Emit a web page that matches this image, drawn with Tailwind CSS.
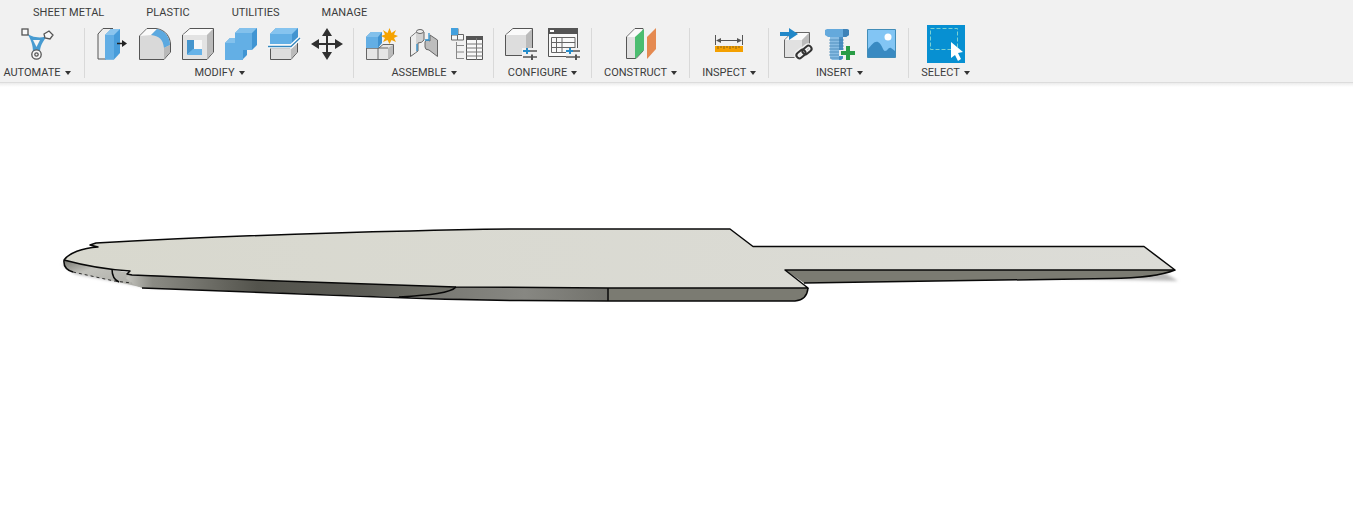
<!DOCTYPE html>
<html lang="en">
<head>
<meta charset="utf-8">
<meta name="viewport" content="width=device-width, initial-scale=1">
<title>Solid modeling workspace</title>
<script src="https://cdn.jsdelivr.net/npm/@tailwindcss/browser@4"></script>
</head>
<body class="min-h-screen bg-white font-['Roboto','Liberation_Sans',sans-serif] text-[11px] leading-4 text-[#3c3c3c]">
<header class="overflow-hidden border-b border-[#dcdcdc] bg-[#f1f1f1]">
  <nav aria-label="Workspace tabs" class="flex gap-[42px] pt-[5px] pl-[33px] whitespace-nowrap">
    <a href="#sheet-metal">SHEET METAL</a>
    <a href="#plastic">PLASTIC</a>
    <a href="#utilities">UTILITIES</a>
    <a href="#manage">MANAGE</a>
  </nav>
  <div role="toolbar" aria-label="Modeling tools" class="flex pt-[7px] pb-1">
    <section class="flex w-[85px] shrink-0 flex-col items-center border-r border-[#d9d9d9] pr-[10px]">
      <div class="flex h-8"><button type="button" aria-label="Automated modeling" class="size-8">
        <svg viewBox="0 0 32 32" class="size-8 overflow-visible"><path d="M5 4C9 10 23 11 27 7C21 14 19 19 19 24H12C12 17 10 11 5 4Z" fill="#479bd1"/><path d="M12 12H19L15.500 19Z" fill="#f5f5f5"/><g fill="#f8f8f8" stroke="#555" stroke-width="1.300"><rect x="1" y="1" width="6" height="6"/><path d="M23 6L28 3L32 7L29 11L24 10Z"/><circle cx="15.500" cy="26.500" r="4.700"/><circle cx="15.500" cy="26.500" r="1.700"/></g></svg></button></div>
      <button type="button" class="flex h-[18px] items-center gap-1 pt-2 leading-[10px]">AUTOMATE<svg viewBox="0 0 6 4" class="h-1 w-[6px]"><path d="M0 0H6L3 4Z" fill="#333"/></svg></button>
    </section>
    <section class="flex shrink-0 flex-col items-center border-r border-[#d9d9d9] pr-[10px] pl-[11px]">
      <div class="flex gap-[11px]">
        <button type="button" aria-label="Press pull" class="size-8"><svg viewBox="0 0 32 32" class="size-8 overflow-visible"><path d="M2 31V6L7 .5H17L10 7V31Z" fill="#eee" stroke="#555"/><path d="M9 7L15 1H24V25L18 31.500H9Z" fill="#479cda"/><path d="M9 7L15 1H24L18 7Z" fill="#8bc5ee"/><path d="M9 7H18V31.500H9Z" fill="#62aee5"/><path d="M21 15.500H27" stroke="#222" stroke-width="1.500"/><path d="M26 12L31 15.500L26 19Z" fill="#222"/></svg></button>
        <button type="button" aria-label="Fillet" class="size-8"><svg viewBox="0 0 32 32" class="size-8 overflow-visible"><path d="M.5 31.500V8L8 .5H17C27 2 31 9 31.500 16V24L25 31.500Z" fill="#d9d9d9" stroke="#555"/><path d="M1 8L8 1H18L12 7Z" fill="#fafafa"/><path d="M12 7L18 1C27 3 31 10 31 17L25 20C24 11 20 8 12 7Z" fill="#5ca9e0"/><path d="M25 20L31 17V24L25 31Z" fill="#b9b9b9"/></svg></button>
        <button type="button" aria-label="Shell" class="size-8"><svg viewBox="0 0 32 32" class="size-8 overflow-visible"><path d="M.5 7L8 .5H31.500V24L25 31.500H.5Z" fill="#e3e3e3" stroke="#555"/><path d="M1 7L8 1H31L25 7Z" fill="#fafafa"/><path d="M25 7L31 1V24L25 31Z" fill="#bbb"/><path d="M5 12H20V27H5Z" fill="#f7f7f7"/><path d="M5 12H12V21L5 27Z" fill="#4595cd"/><path d="M5 27L11 21H20V27Z" fill="#67b3e8"/></svg></button>
        <button type="button" aria-label="Combine" class="size-8"><svg viewBox="0 0 32 32" class="size-8 overflow-visible"><path d="M0 15L5 10H10V5L15 0H32V17L27 22H22V27L17 32H0Z" fill="#4095d3"/><path d="M0 15H10V5H27V22H18V32H0Z" fill="#63afe5"/><path d="M10 5L15 0H32L27 5Z" fill="#83c1ec"/><path d="M0 15L5 10H10V15Z" fill="#83c1ec"/></svg></button>
        <button type="button" aria-label="Split body" class="size-8"><svg viewBox="0 0 32 32" class="size-8 overflow-visible"><path d="M2.500 20H22L29.500 13V24L23 31.500H2.500Z" fill="#ddd" stroke="#555"/><path d="M23 21L29 15V24L23 31Z" fill="#bbb"/><path d="M2 6L8 0H30V10L24 16H2Z" fill="#4294d0"/><path d="M2 6H24V16H2Z" fill="#62afe5"/><path d="M2 6L8 0H30L24 6Z" fill="#86c4ef"/><path d="M0 18.500H23L32 10" fill="none" stroke="#fff" stroke-width="4"/><path d="M0 18.500H23L32 10" fill="none" stroke="#3486bd" stroke-width="1.300"/></svg></button>
        <button type="button" aria-label="Move" class="size-8"><svg viewBox="0 0 32 32" class="size-8 overflow-visible"><path d="M16 3V29M3 16H29" stroke="#303030" stroke-width="2"/><path d="M16 0L21 8H11ZM16 32L11 24H21ZM0 16L8 11V21ZM32 16L24 21V11Z" fill="#303030"/></svg></button>
      </div>
      <button type="button" class="flex h-[18px] items-center gap-1 pt-2 leading-[10px]">MODIFY<svg viewBox="0 0 6 4" class="h-1 w-[6px]"><path d="M0 0H6L3 4Z" fill="#333"/></svg></button>
    </section>
    <section class="flex shrink-0 flex-col items-center border-r border-[#d9d9d9] pr-[10px] pl-[11px]">
      <div class="flex gap-[11px]">
        <button type="button" aria-label="New component" class="size-8"><svg viewBox="0 0 32 32" class="size-8 overflow-visible"><path d="M1.500 20H14L18 16.500H28.500V26L23 31.500H1.500Z" fill="#e5e5e5" stroke="#666"/><path d="M13 20V31M1 20H23" stroke="#666"/><path d="M23 20L28 17V26L23 31Z" fill="#bbb"/><path d="M1 9L6 4H17V15L13 20H1Z" fill="#3f91cf"/><path d="M1 9H13V20H1Z" fill="#63aee4"/><path d="M1 9L6 4H17L13 9Z" fill="#82c0eb"/><path d="M24.500 0L26.500 5L31 2L29 6.500L33 8L29 10L31 14L26.500 12L24.500 16L22.500 12L18 14L20 10L16 8L20 6.500L18 2L22.500 5Z" fill="#f5a300"/></svg></button>
        <button type="button" aria-label="Joint" class="size-8"><svg viewBox="0 0 32 32" class="size-8 overflow-visible"><path d="M2.500 9L10 3Q14 1 16 4V12Q14 15 10 15V23L2.500 28.500Z" fill="#d2d2d2" stroke="#666"/><path d="M3 9L8 5V24L3 27Z" fill="#eee"/><path d="M22 13V7L29.500 12V28.500L21 22Q17 22 17 19V14Q18 11 22 13Z" fill="#bdbdbd" stroke="#666"/><ellipse cx="12" cy="3.500" rx="3.500" ry="2" fill="#eee" stroke="#666"/><path d="M9 16V23M21 5V12H17" fill="none" stroke="#3192cf" stroke-width="1.300"/></svg></button>
        <button type="button" aria-label="Table of components" class="size-8"><svg viewBox="0 0 32 32" class="size-8 overflow-visible"><path d="M5.500 14V31M5.500 17.500H13M5.500 24H13M5.500 30.500H13" fill="none" stroke="#888"/><path d="M.500 .5H7V7H.5ZM.5 6.500H6.500V12H.5ZM6.500 6.500H12.500V12H6.500Z" fill="#f7f7f7" stroke="#666"/><path d="M0 0H7V7H0Z" fill="#43a0dd"/><path d="M15.500 8.500H31.500V31.500H15.500Z" fill="#f9f9f9" stroke="#555"/><path d="M15 8H32V12H15Z" fill="#555"/><path d="M15 16H32M15 20H32M15 24H32M15 28H32M25.500 10V32" stroke="#777"/></svg></button>
      </div>
      <button type="button" class="flex h-[18px] items-center gap-1 pt-2 leading-[10px]">ASSEMBLE<svg viewBox="0 0 6 4" class="h-1 w-[6px]"><path d="M0 0H6L3 4Z" fill="#333"/></svg></button>
    </section>
    <section class="flex shrink-0 flex-col items-center border-r border-[#d9d9d9] px-[11px]">
      <div class="flex gap-[11px]">
        <button type="button" aria-label="Configure model" class="size-8"><svg viewBox="0 0 32 32" class="size-8 overflow-visible"><path d="M.5 7L8 .5H27.500V20L20 27.500H.5Z" fill="#ddd" stroke="#555"/><path d="M1 7L8 1H27L21 7Z" fill="#fafafa"/><path d="M21 7L27 1V20L21 27Z" fill="#bbb"/><path d="M17 20H33V33H17Z" fill="#f1f1f1"/><path d="M18 23H32M18 29H32" stroke="#555" stroke-width="1.600"/><path d="M18 23H25M22 20V26" stroke="#258bc9" stroke-width="2"/><path d="M27 26.500V32" stroke="#555" stroke-width="2"/></svg></button>
        <button type="button" aria-label="Configuration table" class="size-8"><svg viewBox="0 0 32 32" class="size-8 overflow-visible"><path d="M.5 .5H29.500V28.500H.5Z" fill="#f9f9f9" stroke="#555"/><path d="M0 0H30V6H0Z" fill="#555"/><path d="M2 2H6V4H2Z" fill="#fff"/><path d="M3.500 9.500H27V24.500H3.500ZM3.500 14.500H27M3.500 19.500H27M8.500 9.500V24.500M14 9.500V24.500" fill="none" stroke="#666"/><path d="M18 20H33V33H18Z" fill="#f1f1f1"/><path d="M18 23H32M18 29H32" stroke="#555" stroke-width="1.600"/><path d="M18 23H25M22 20V26" stroke="#258bc9" stroke-width="2"/><path d="M28 26.500V32" stroke="#555" stroke-width="2"/></svg></button>
      </div>
      <button type="button" class="flex h-[18px] items-center gap-1 pt-2 leading-[10px]">CONFIGURE<svg viewBox="0 0 6 4" class="h-1 w-[6px]"><path d="M0 0H6L3 4Z" fill="#333"/></svg></button>
    </section>
    <section class="flex shrink-0 flex-col items-center border-r border-[#d9d9d9] px-3">
      <button type="button" aria-label="Offset plane" class="size-8"><svg viewBox="0 0 32 32" class="size-8 overflow-visible"><path d="M1.500 30.500V9L10 .5H18V23L11 30.500Z" fill="#e1e1e1" stroke="#555"/><path d="M2 9L10 1H18L11 9Z" fill="#fafafa"/><path d="M10 9L19 1V22L10 31Z" fill="#4bbd70"/><path d="M22 9L31 0V21L22 31Z" fill="#e58a51"/></svg></button>
      <button type="button" class="flex h-[18px] items-center gap-1 pt-2 leading-[10px]">CONSTRUCT<svg viewBox="0 0 6 4" class="h-1 w-[6px]"><path d="M0 0H6L3 4Z" fill="#333"/></svg></button>
    </section>
    <section class="flex shrink-0 flex-col items-center border-r border-[#d9d9d9] px-3">
      <button type="button" aria-label="Measure" class="size-8"><svg viewBox="0 0 32 32" class="size-8 overflow-visible"><path d="M2.500 7V17M29.500 7V17M4 12.500H28" stroke="#555"/><path d="M3 12.500L8 10V15ZM29 12.500L24 10V15Z" fill="#555"/><path d="M2 18H30V24H2Z" fill="#f4a000"/><path d="M5 18V21M8 18V20M11 18V21M14 18V20M17 18V21M20 18V20M23 18V21M26 18V20" stroke="#8b6416"/></svg></button>
      <button type="button" class="flex h-[18px] items-center gap-1 pt-2 leading-[10px]">INSPECT<svg viewBox="0 0 6 4" class="h-1 w-[6px]"><path d="M0 0H6L3 4Z" fill="#333"/></svg></button>
    </section>
    <section class="flex shrink-0 flex-col items-center border-r border-[#d9d9d9] pr-[10px] pl-[11px]">
      <div class="flex gap-[11px]">
        <button type="button" aria-label="Insert derive" class="size-8"><svg viewBox="0 0 32 32" class="size-8 overflow-visible"><path d="M4.500 12L12 4.500H29.500V22L22 29.500H4.500Z" fill="#e1e1e1" stroke="#666"/><path d="M5 12L12 5H29L22 12Z" fill="#fafafa"/><path d="M22 12L29 5V22L22 29Z" fill="#bbb"/><path d="M0 4H9V0L18 6L9 12V8H0Z" fill="#2288c8"/><g fill="none" stroke="#f1f1f1" stroke-width="5"><rect x="16" y="23" width="10" height="6" rx="3" transform="rotate(-40 21 26)"/><rect x="22" y="19" width="10" height="6" rx="3" transform="rotate(-40 27 22)"/></g><g fill="none" stroke="#333" stroke-width="2"><rect x="16" y="23" width="10" height="6" rx="3" transform="rotate(-40 21 26)"/><rect x="22" y="19" width="10" height="6" rx="3" transform="rotate(-40 27 22)"/></g></svg></button>
        <button type="button" aria-label="Insert fastener" class="size-8"><svg viewBox="0 0 32 32" class="size-8 overflow-visible"><path d="M2 2L4 1H24L26 2V7L23 9H5L2 7Z" fill="#64a9dc"/><path d="M20 1H24L26 2V7L23 9H20Z" fill="#3f83b8"/><path d="M7 9H20V30L18 32H9L7 30Z" fill="#88bce3"/><path d="M16 9H20V30L18 32H16Z" fill="#4f91c5"/><path d="M6 12H21M6 15H21M6 18H21M6 21H21M6 24H21M6 27H21M7 30H20" stroke="#397faf" stroke-width=".7"/><path d="M21 17H28V22H33V28H28V33H21V28H16V22H21Z" fill="#f1f1f1"/><path d="M23 18H27V23H32V27H27V32H23V27H18V23H23Z" fill="#299c46"/></svg></button>
        <button type="button" aria-label="Insert canvas" class="size-8"><svg viewBox="0 0 32 32" class="size-8 overflow-visible"><path d="M1.500 1.500H29.500V29.500H1.500Z" fill="#82c5f4" stroke="#428db8"/><circle cx="22" cy="9" r="3.500" fill="#fff"/><path d="M2 21C6 17 8 13 12 14C16 16 17 23 19 23C22 23 22 19 25 20L29 23V29H2Z" fill="#398ac2"/></svg></button>
      </div>
      <button type="button" class="flex h-[18px] items-center gap-1 pt-2 leading-[10px]">INSERT<svg viewBox="0 0 6 4" class="h-1 w-[6px]"><path d="M0 0H6L3 4Z" fill="#333"/></svg></button>
    </section>
    <section class="flex shrink-0 flex-col items-center px-3">
      <button type="button" aria-label="Window selection" aria-pressed="true" class="size-8"><svg viewBox="0 0 32 32" class="size-8 overflow-visible"><path d="M-3 -3H35V35H-3Z" fill="#0790d2"/><path d="M.5 .5H27.500V21.500H.5Z" fill="none" stroke="#7dd1d1" stroke-dasharray="4 2"/><path d="M21 14V30L25 27L28 33L31 31L28 25L33 24Z" fill="#fff"/></svg></button>
      <button type="button" class="flex h-[18px] items-center gap-1 pt-2 leading-[10px]">SELECT<svg viewBox="0 0 6 4" class="h-1 w-[6px]"><path d="M0 0H6L3 4Z" fill="#333"/></svg></button>
    </section>
  </div>
</header>
<main>
  <svg viewBox="0 83 1353 433" role="img" aria-label="Side view of a flat blade with a narrow handle" class="block h-auto w-full">
    <defs>
      <linearGradient id="bar" x2="0" y2="1"><stop stop-color="#ececec"/><stop offset="1" stop-color="#fff"/></linearGradient>
      <linearGradient id="top" x2="1" y2="0"><stop stop-color="#d8d8ce"/><stop offset="1" stop-color="#dcdcd7"/></linearGradient>
      <linearGradient id="tip" x2="1" y2="1"><stop stop-color="#777770"/><stop offset=".35" stop-color="#c2c2bc"/><stop offset="1" stop-color="#aaaaa4"/></linearGradient>
      <linearGradient id="edge" gradientUnits="userSpaceOnUse" x1="126" y1="0" x2="456" y2="0"><stop stop-color="#c6c6c0"/><stop offset=".08" stop-color="#8b8b84"/><stop offset=".4" stop-color="#53534c"/><stop offset=".7" stop-color="#5b5b55"/><stop offset="1" stop-color="#73736b"/></linearGradient>
      <linearGradient id="mid" x2="1" y2="0"><stop stop-color="#73736d"/><stop offset=".6" stop-color="#878782"/><stop offset="1" stop-color="#72726c"/></linearGradient>
      <filter id="soft" x="-10%" y="-80%" width="120%" height="260%"><feGaussianBlur stdDeviation="1.500"/></filter>
    </defs>
    <path d="M0 83H1353V87H0Z" fill="url(#bar)"/>
    <path d="M62 264L75 274L145 287L170 288L130 275ZM1050 278L1178 281L1165 273L1110 275Z" fill="#b9b9b9" filter="url(#soft)"/>
    <path d="M64 260Q63 269 72 272L114 281L140 287L130 273Z" fill="url(#tip)"/>
    <path d="M130 274L456 287C451 293 430 295 399 297L142 288Q131 284 126 278Z" fill="url(#edge)"/>
    <path d="M399 297C430 295 451 293 456 287L608 288V301L490 300Z" fill="url(#mid)"/>
    <path d="M608 288H808Q807 300 796 301H608ZM785 270H1175Q1160 276 1140 278L804 283Z" fill="#7b7b72"/>
    <path d="M64 260C69 253 82 248 98 247L90 245L96 243C190 238 310 233 410 231Q470 229 540 229H730L753 246.500H1144L1175 270H785L808 288H608L456 287L280 281L127 274L130 271Q97 269 64 260Z" fill="url(#top)"/>
    <g fill="none" stroke="#080808" stroke-width="1.500" stroke-linejoin="round">
      <path d="M64 260C69 253 82 248 98 247L90 245L96 243C190 238 310 233 410 231Q470 229 540 229H730L753 246.500H1144L1175 270H785L808 288H608L456 287L280 281L132 275L127 274L130 271Q97 269 64 260Q63 269 73 272"/>
      <path d="M73 272L114 281L132 283" stroke-dasharray="3 3" stroke-width=".8"/>
      <path d="M112 269Q112 279 119 282M142 288L380 297Q450 300 520 300.500L608 301H795Q807 300 808 288M399 297C430 295 451 293 456 287M608 288V301M804 283L1110 278.500Q1155 278 1175 270"/>
    </g>
  </svg>
</main>
</body>
</html>
